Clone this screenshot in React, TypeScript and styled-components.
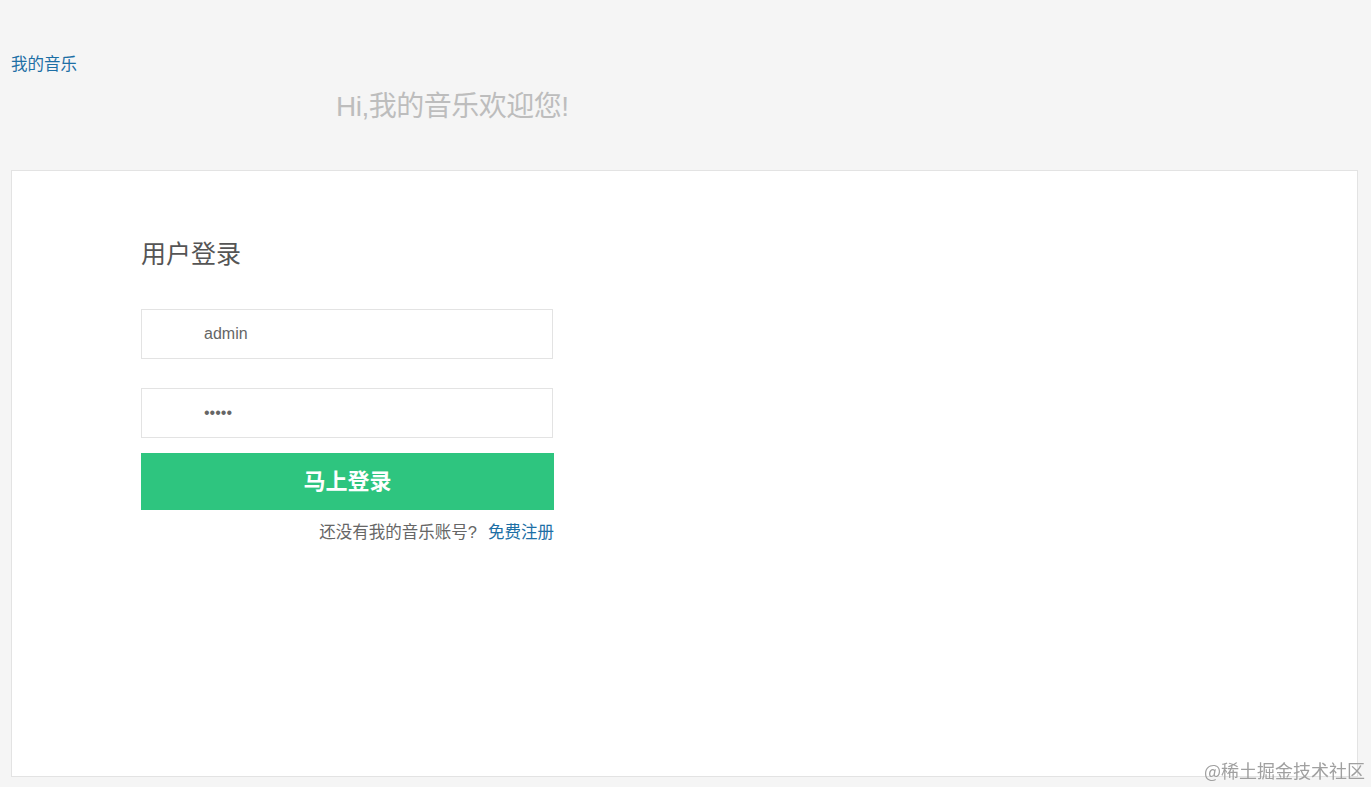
import React from 'react'
import styled, { createGlobalStyle } from 'styled-components'

const GlobalStyle = createGlobalStyle`
    html, body {
        margin: 0;
        padding: 0;
        background: #f5f5f5;
        font-family: "Liberation Sans", "Noto Sans CJK SC", sans-serif;
    }
`

export default function App(): JSX.Element {
    return (
        <Page>
            <GlobalStyle />
            <Header>
                <HomeLink href="#">我的音乐</HomeLink>
                <Welcome>Hi,我的音乐欢迎您!</Welcome>
            </Header>
            <Card>
                <Form onSubmit={e => e.preventDefault()}>
                    <Title>用户登录</Title>
                    <Field type="text" defaultValue="admin" />
                    <Field type="password" defaultValue="admin" $gap={29} />
                    <SubmitButton type="submit">马上登录</SubmitButton>
                    <RegisterLine>
                        还没有我的音乐账号?<RegisterLink href="#">免费注册</RegisterLink>
                    </RegisterLine>
                </Form>
            </Card>
            <Watermark>@稀土掘金技术社区</Watermark>
        </Page>
    )
}

const Page = styled.div`
    min-height: 787px;
    padding: 0 13px 10px 11px;
    box-sizing: border-box;
    display: flex;
    flex-direction: column;
`

const Header = styled.div`
    height: 170px;
    display: flex;
    flex-direction: column;
    padding-top: 52px;
    box-sizing: border-box;
`

const HomeLink = styled.a`
    font-size: 16.5px;
    line-height: 24px;
    color: #1d6fa5;
    text-decoration: none;
    align-self: flex-start;
`

const Welcome = styled.h1`
    margin: 14px 0 0 325px;
    font-size: 28px;
    line-height: 34px;
    font-weight: normal;
    letter-spacing: -0.5px;
    color: #bdbdbd;
`

const Card = styled.div`
    flex: 1;
    background: #fff;
    border: 1px solid #e3e3e3;
    padding: 65px 0 0 129px;
`

const Form = styled.form`
    width: 413px;
    display: flex;
    flex-direction: column;
`

const Title = styled.h2`
    margin: 0 0 37px;
    font-size: 25px;
    line-height: 36px;
    font-weight: normal;
    color: #555;
`

const Field = styled.input<{ $gap?: number }>`
    width: 412px;
    height: 50px;
    box-sizing: border-box;
    margin-top: ${p => p.$gap ?? 0}px;
    border: 1px solid #e3e3e3;
    padding: 0 0 0 62px;
    font-family: "Liberation Sans", sans-serif;
    font-size: 16px;
    color: #666;
    outline: none;
`

const SubmitButton = styled.button`
    margin-top: 15px;
    height: 57px;
    padding: 0 0 5px;
    border: none;
    background: #2ec57f;
    color: #fff;
    font-family: "Noto Sans CJK SC", sans-serif;
    font-size: 22px;
    font-weight: bold;
    cursor: pointer;
`

const RegisterLine = styled.p`
    margin: 11px 0 0;
    text-align: right;
    font-size: 16.5px;
    line-height: 22px;
    color: #666;
`

const RegisterLink = styled.a`
    color: #1d6fa5;
    text-decoration: none;
    margin-left: 11px;
`

const Watermark = styled.div`
    position: fixed;
    right: 6px;
    bottom: 4px;
    font-size: 18px;
    color: #a0a0a0;
    font-family: "Noto Sans CJK SC", serif;
    pointer-events: none;
`
